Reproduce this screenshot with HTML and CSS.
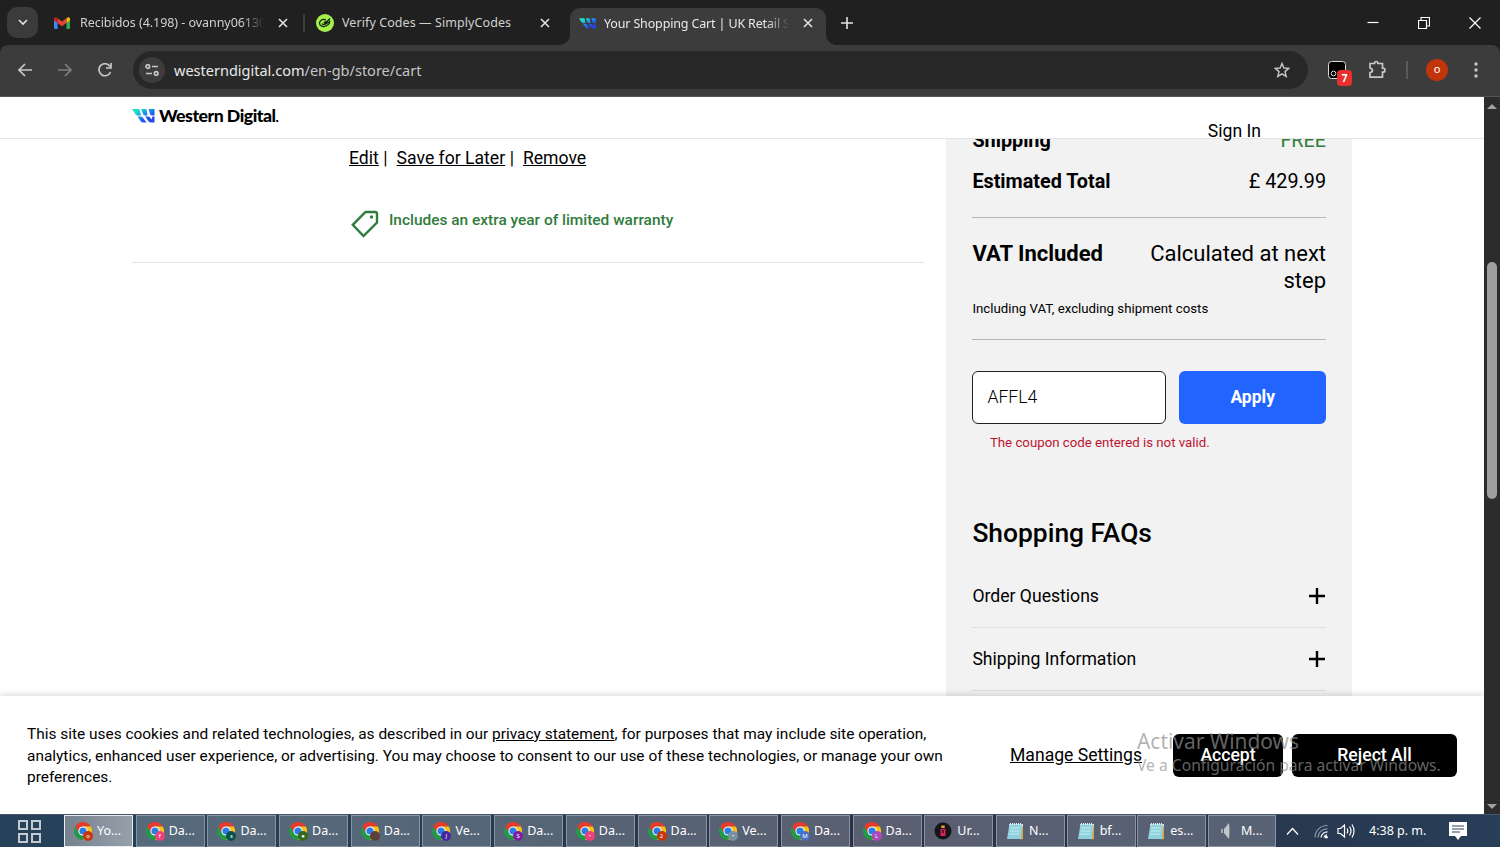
FILE: index.html
```html
<!DOCTYPE html>
<html lang="en">

<head>
    <meta charset="UTF-8">
    <meta name="viewport" content="width=device-width, initial-scale=1.0">
    <title>Your Shopping Cart | UK Retail Store</title>
    <link rel="stylesheet" href="styles.css">
</head>

<body>
    <!-- shared icons -->
    <svg class="defs">
        <linearGradient id="wd-fill" gradientUnits="userSpaceOnUse" x1="5" y1="0" x2="14" y2="14">
            <stop offset="0.1" stop-color="#1fe0c4" />
            <stop offset="0.5" stop-color="#1b8df0" />
            <stop offset="0.9" stop-color="#2347e8" />
        </linearGradient>
        <symbol id="wd" viewBox="0 0 24 14">
            <path fill="url(#wd-fill)" d="M0 0H6.500Q7.500 0 7.700 1L9 6.500H6Q4 6.500 3.200 5zM9 0H13Q14.500 0 14.700 1L15.500 6.500H13.500Q11.500 6.500 11 5zM16.500 0H22.500V6.500H20.500Q18.500 6.500 18 5zM5.500 7.500H9Q10.500 7.500 11.200 9L14.500 13.500H11.500Q9.500 13.500 8.500 12zM13 7.500H16Q17.500 7.500 18.300 8.700L19.500 10.500 20.500 7.500H22.500V13.500H19.500Q17.500 13.500 16.500 12.200z" />
        </symbol>
        <symbol id="close" viewBox="0 0 10 10">
            <path d="M1 1l8 8M9 1L1 9" />
        </symbol>
        <symbol id="chrome" viewBox="1 1 18 18">
            <path fill="#e33b2e" d="M2.200 5.500A9 9 0 0 1 17.800 5.500H10L6.100 12.250z" />
            <path fill="#fbc116" d="M17.800 5.500A9 9 0 0 1 10 19L13.900 12.250 10 5.500z" />
            <path fill="#229a48" d="M10 19A9 9 0 0 1 2.200 5.500L6.100 12.250H13.900z" />
            <circle cx="10" cy="10" r="4.600" fill="#fff" />
            <circle cx="10" cy="10" r="3.600" fill="#2a7de9" />
        </symbol>
        <symbol id="notepad" viewBox="0 0 18 18">
            <path fill="#e8e3cf" d="M3 2h14v15H3z" />
            <path fill="#d9a648" d="M16 4l1 1v12l-3 .5z" />
            <path fill="#8fd0dd" d="M3.500 2H16l-1 15H1z" />
            <path stroke="#c7edf3" stroke-width="1" d="M4 6h10M3.600 9h10M3.200 12h10" />
            <path stroke="#eee" stroke-dasharray="1 1" stroke-width="2" d="M4 2h12" />
        </symbol>
    </svg>

    <div class="tabstrip">
        <div class="tab-search">
            <svg width="10" height="7" viewBox="0 0 10 7"><path d="M1 1l4 4 4-4" /></svg>
        </div>
        <div class="tab gmail">
            <svg class="favicon" width="16" height="12" viewBox="0 0 16 12">
                <path fill="#4285f4" d="M0 2v9q0 1 1 1h2.600V4.500z" />
                <path fill="#34a853" d="M16 2v9q0 1-1 1h-2.600V4.500z" />
                <path fill="#fbbc04" d="M12.400 1.200Q15.500-1 16 2v1.300l-3.600 2.700z" />
                <path fill="#c5221f" d="M3.600 1.200Q.5-1 0 2v1.300L3.600 6z" />
                <path fill="#ea4335" d="M3.600 1.200L8 4.500l4.400-3.300V6L8 9.300 3.600 6z" />
            </svg>
            <span class="tab-title">Recibidos (4.198) - ovanny06130</span>
            <svg class="x" width="10" height="10"><use href="#close" /></svg>
        </div>
        <div class="tab-divider"></div>
        <div class="tab simply">
            <svg class="favicon" width="18" height="18" viewBox="0 0 18 18">
                <circle cx="9" cy="9" r="9" fill="#a6f04d" />
                <g fill="none" stroke="#14240c" stroke-width="1.300">
                    <path d="M10 5.800C6 4.500 3.300 7 3.500 9.500S7 13.300 10 12s4-3.500 3.500-5.500" />
                    <path d="M6 9.500c1 2 2 1 3.500-.5L14 4.500M7.500 8.500l4-1.500M9 10.500l4-2.500" />
                </g>
            </svg>
            <span class="tab-title">Verify Codes — SimplyCodes</span>
            <svg class="x" width="10" height="10"><use href="#close" /></svg>
        </div>
        <div class="tab active">
            <svg class="favicon" width="18" height="11"><use href="#wd" /></svg>
            <span class="tab-title">Your Shopping Cart | UK Retail Store</span>
            <svg class="x" width="10" height="10"><use href="#close" /></svg>
        </div>
        <svg class="new-tab" width="12" height="12" viewBox="0 0 12 12"><path d="M6 0v12M0 6h12" /></svg>
        <div class="window-buttons">
            <svg width="12" height="12" viewBox="0 0 12 12"><path d="M0.500 5.500h11" /></svg>
            <svg width="12" height="12" viewBox="0 0 12 12"><path d="M.5 3.500h8v8h-8zM3 3V.5h8.500V9H9" /></svg>
            <svg width="12" height="12" viewBox="0 0 12 12"><path d="M.5.5l11 11M11.500.5l-11 11" /></svg>
        </div>
    </div>

    <div class="toolbar">
        <div class="nav">
            <svg width="14" height="14" viewBox="0 0 14 14"><path d="M14 7H1.500M7 1L1 7l6 6" /></svg>
            <svg class="off" width="14" height="14" viewBox="0 0 14 14"><path d="M0 7h12.500M7 1l6 6-6 6" /></svg>
            <svg width="14" height="14" viewBox="0 0 14 14"><path d="M12.500 9A6 6 0 1 1 12 3.500M13 0v5H8" /></svg>
        </div>
        <div class="omnibox">
            <div class="site-info">
                <svg width="14" height="12" viewBox="0 0 14 12">
                    <path d="M7 2.500h6M1 9.500h6" />
                    <circle cx="2.800" cy="2.500" r="1.800" />
                    <circle cx="11.200" cy="9.500" r="1.800" />
                </svg>
            </div>
            <div class="url">westerndigital.com<span>/en-gb/store/cart</span></div>
            <svg class="star" width="16" height="16" viewBox="0 0 16 16"><path d="M8 1.500l1.900 4.500 4.800.4-3.700 3.200 1.200 4.800L8 11.800l-4.200 2.600L5 9.600 1.300 6.400 6.100 6z" /></svg>
        </div>
        <div class="ext">
            <svg width="18" height="18" viewBox="0 0 18 18">
                <rect x=".5" y=".5" width="17" height="17" rx="3" fill="#000" stroke="#ddd" />
                <circle cx="5.500" cy="12.500" r="2.300" fill="none" stroke="#ddd" />
            </svg>
            <span class="ext-count">7</span>
        </div>
        <svg class="puzzle" width="19" height="19" viewBox="0 0 19 19"><path d="M2 3.500h4.500q0-2 1.700-2t1.700 2h4.600v4.700q2.500 0 2.500 2t-2.500 2v5H2v-4.500q2.500-.5 2.500-2.200T2 8z" /></svg>
        <div class="bar"></div>
        <div class="avatar">o</div>
        <svg class="dots" width="4" height="16" viewBox="0 0 4 16">
            <circle cx="2" cy="2" r="1.700" />
            <circle cx="2" cy="8" r="1.700" />
            <circle cx="2" cy="14" r="1.700" />
        </svg>
    </div>

    <div class="viewport">
        <div class="page">
            <header class="site-header">
                <div class="logo">
                    <svg width="24" height="14"><use href="#wd" /></svg>
                    <span>Western Digital<small>.</small></span>
                </div>
                <a class="sign-in">Sign In</a>
            </header>

            <main class="cart">
                <section class="items">
                    <div class="item-links"><a>Edit</a><i>|</i><a>Save for Later</a><i>|</i><a>Remove</a></div>
                    <div class="warranty">
                        <svg width="28" height="28" viewBox="0 0 28 28">
                            <path d="M14.500 2H24q2 0 2 2v8.500L12.500 26 1.800 14.800z" />
                            <circle cx="20.500" cy="7" r="1.700" />
                        </svg>
                        <span>Includes an extra year of limited warranty</span>
                    </div>
                </section>

                <aside class="summary">
                    <div class="row shipping"><b>Shipping</b><span class="free">FREE</span></div>
                    <div class="row total"><b>Estimated Total</b><span>£ 429.99</span></div>
                    <div class="vat">
                        <div class="vat-row"><b>VAT Included</b><span>Calculated at next step</span></div>
                        <p>Including VAT, excluding shipment costs</p>
                    </div>
                    <div class="coupon">
                        <input type="text" value="AFFL4">
                        <button>Apply</button>
                    </div>
                    <p class="error">The coupon code entered is not valid.</p>
                    <h2>Shopping FAQs</h2>
                    <div class="faq"><span>Order Questions</span><svg width="16" height="16" viewBox="0 0 16 16"><path d="M8 0v16M0 8h16" /></svg></div>
                    <div class="faq"><span>Shipping Information</span><svg width="16" height="16" viewBox="0 0 16 16"><path d="M8 0v16M0 8h16" /></svg></div>
                </aside>
            </main>

            <div class="cookies">
                <p>This site uses cookies and related technologies, as described in our <a>privacy statement</a>, for purposes that may include site operation,<br>analytics, enhanced user experience, or advertising. You may choose to consent to our use of these technologies, or manage your own<br>preferences.</p>
                <a class="manage">Manage Settings</a>
                <button class="accept">Accept</button>
                <button class="reject">Reject All</button>
            </div>
        </div>
        <div class="scrollbar">
            <div class="arrow up"></div>
            <div class="thumb"></div>
            <div class="arrow down"></div>
        </div>
    </div>

    <div class="taskbar">
        <svg class="task-view" width="23" height="23" viewBox="0 0 23 23"><path d="M1 1h8v8H1zM14 1h8v8h-8zM1 14h8v8H1zM14 14h8v8h-8z" /></svg>
        <div class="tasks">
            <div class="task current"><svg><use href="#chrome" /></svg><em class="orange">o</em>Yo...</div>
            <div class="task"><svg><use href="#chrome" /></svg><em class="pink">f</em>Da...</div>
            <div class="task"><svg><use href="#chrome" /></svg><em class="teal">s</em>Da...</div>
            <div class="task"><svg><use href="#chrome" /></svg><em class="green">●</em>Da...</div>
            <div class="task"><svg><use href="#chrome" /></svg><em class="brown"></em>Da...</div>
            <div class="task"><svg><use href="#chrome" /></svg><em class="indigo">J</em>Ve...</div>
            <div class="task"><svg><use href="#chrome" /></svg><em class="purple">S</em>Da...</div>
            <div class="task"><svg><use href="#chrome" /></svg><em class="pink">•</em>Da...</div>
            <div class="task"><svg><use href="#chrome" /></svg><em class="orange">2</em>Da...</div>
            <div class="task"><svg><use href="#chrome" /></svg><em class="grey">•</em>Ve...</div>
            <div class="task"><svg><use href="#chrome" /></svg><em class="blue">M</em>Da...</div>
            <div class="task"><svg><use href="#chrome" /></svg><em class="violet">L</em>Da...</div>
            <div class="task">
                <svg viewBox="0 0 18 18">
                    <circle cx="9" cy="9" r="8.500" fill="#161516" />
                    <path fill="#d91f5e" d="M6.500 7h5v7h-5z" />
                    <path fill="#e5a52f" d="M7.300 3.500h3.400v2.500H7.300z" />
                    <path fill="#161516" d="M8.300 8h1.400v3H8.300z" />
                </svg>Ur...</div>
            <div class="task note"><svg><use href="#notepad" /></svg>N...</div>
            <div class="task note"><svg><use href="#notepad" /></svg>bf...</div>
            <div class="task note"><svg><use href="#notepad" /></svg>es...</div>
            <div class="task note last">
                <svg viewBox="0 0 18 18">
                    <path fill="#c3c7cb" d="M11 1l-5 6v4l5 6z" />
                    <path fill="#878d95" d="M11 1q2 8 0 16z" />
                    <path fill="#a9aeb4" d="M3 7h2v4H3z" />
                </svg>M...</div>
        </div>
        <div class="tray">
            <svg width="13" height="9" viewBox="0 0 13 9"><path d="M1 7.500L6.500 1.500 12 7.500" /></svg>
            <svg width="15" height="15" viewBox="0 0 15 15">
                <path class="dim" d="M1 13.500A12 12 0 0 1 13.500 1.500M4 13.500A9 9 0 0 1 13.500 4.800" />
                <path d="M7 13.500A6.500 6.500 0 0 1 13.500 7.800M10 13.500q.5-2.500 3-3" />
                <circle cx="12.300" cy="13" r="1.500" fill="#fff" stroke="none" />
            </svg>
            <svg width="19" height="16" viewBox="0 0 19 16"><path d="M1 5.500h2.500L7.500 2v12l-4-3.500H1zM10 5.500q1.500 2.500 0 5M12.500 3.500q3 4.500 0 9M15 1.500q4 6.500 0 13" /></svg>
            <span>4:38 p. m.</span>
            <svg class="notes" width="18" height="18" viewBox="0 0 18 18">
                <path fill="#fff" stroke="none" d="M0 0h18v14h-6l-3 4-3-4H0z" />
                <path stroke="#2d4257" d="M3 4h12M3 7h12M3 10h8" />
            </svg>
        </div>
    </div>

    <div class="watermark">
        <div>Activar Windows</div>
        <p>Ve a Configuración para activar Windows.</p>
    </div>
</body>

</html>
```
FILE: styles.css
```css
* {
    box-sizing: border-box;
}

body {
    margin: 0;
    height: 847px;
    display: flex;
    flex-direction: column;
    overflow: hidden;
    background-color: #202020;
    font-family: Roboto, sans-serif;
    color: #000;
}

p, h2 {
    margin: 0;
}

svg {
    flex: none;
    fill: none;
}

.defs {
    position: absolute;
    width: 0;
    height: 0;
}

/* tabs */
.tabstrip {
    height: 45px;
    display: flex;
    align-items: center;
    padding-left: 7px;
    font-family: "Noto Sans", sans-serif;
    font-size: 12.5px;
    color: #d0d0d0;
    stroke: #e3e3e3;
    stroke-width: 1.6;
}

.tab-search {
    width: 31px;
    height: 31px;
    margin-right: 6px;
    border-radius: 10px;
    background-color: #3b3b3b;
    display: flex;
    align-items: center;
    justify-content: center;
}

.favicon {
    stroke: none;
}

.tab {
    display: flex;
    align-items: center;
    height: 37px;
    padding: 0 12px 0 10px;
}

.tab-title {
    flex: 1;
    margin: 0 14px 0 8px;
    overflow: hidden;
    white-space: nowrap;
    stroke: none;
    letter-spacing: -0.15px;
}

.gmail {
    width: 256px;
}

.gmail .tab-title {
    margin-left: 10px;
    letter-spacing: -0.05px;
}

.gmail .tab-title,
.active .tab-title {
    -webkit-mask-image: linear-gradient(90deg, #000 88%, transparent);
    mask-image: linear-gradient(90deg, #000 88%, transparent);
}

.tab-divider {
    width: 2px;
    height: 18px;
    margin-left: 3px;
    background-color: #3d3d3d;
}

.simply {
    width: 257px;
    padding-left: 11px;
    margin-right: 8px;
}

.simply .tab-title {
    letter-spacing: 0.08px;
}

.active {
    width: 256px;
    align-self: flex-end;
    border-radius: 10px 10px 0 0;
    background-color: #3c3c3c;
    color: #e8e8e8;
    position: relative;
    padding: 0 13px 7px 9px;
}

.active .tab-title {
    margin-left: 7px;
}

.active::before,
.active::after {
    content: "";
    position: absolute;
    bottom: 0;
    left: -10px;
    width: 10px;
    height: 10px;
    background: radial-gradient(circle at 0 0, transparent 9.5px, #3c3c3c 10px);
}

.active::after {
    left: auto;
    right: -10px;
    background: radial-gradient(circle at 100% 0, transparent 9.5px, #3c3c3c 10px);
}

.new-tab {
    margin-left: 15px;
}

.window-buttons {
    margin-left: auto;
    padding-right: 19px;
    display: flex;
    gap: 39px;
    stroke: #fff;
    stroke-width: 1.2;
}

/* address bar */
.toolbar {
    height: 52px;
    display: flex;
    align-items: center;
    padding: 0 22px 2px 18px;
    border-radius: 8px 8px 0 0;
    background-color: #3c3c3c;
    border-bottom: 1px solid #555;
    font-family: "Noto Sans", sans-serif;
    stroke: #c7c7c7;
    stroke-width: 1.7;
}

.nav {
    display: flex;
    gap: 26px;
    width: 115px;
}

.off {
    stroke: #7d7d7d;
}

.omnibox {
    width: 1175px;
    height: 38px;
    display: flex;
    align-items: center;
    padding: 0 18px 0 6px;
    border-radius: 19px;
    background-color: #282828;
}

.site-info {
    width: 26px;
    height: 26px;
    border-radius: 50%;
    background-color: #3c3c3c;
    display: flex;
    align-items: center;
    justify-content: center;
}

.url {
    flex: 1;
    margin-left: 9px;
    font-size: 14.5px;
    color: #e8e8e8;
    stroke: none;
}

.url span {
    color: #c4c4c4;
}

.star {
    stroke-width: 1.4;
}

.ext {
    position: relative;
    height: 18px;
    margin-left: 20px;
    stroke-width: 1;
}

.ext-count {
    position: absolute;
    left: 9px;
    top: 9px;
    width: 15px;
    height: 16px;
    border-radius: 4px;
    background-color: #e8302f;
    color: #fff;
    font-size: 10px;
    font-weight: bold;
    line-height: 16px;
    text-align: center;
    stroke: none;
}

.puzzle {
    margin-left: 22px;
}

.bar {
    width: 2px;
    height: 18px;
    margin: 0 18px 0 19px;
    background-color: #5a5a5a;
}

.avatar {
    width: 22px;
    height: 22px;
    border-radius: 50%;
    background-color: #c2350b;
    color: #fff;
    font-size: 11px;
    line-height: 20px;
    text-align: center;
    stroke: none;
}

.dots {
    margin-left: auto;
    fill: #c7c7c7;
    stroke: none;
}

/* web page */
.viewport {
    height: 717px;
    display: flex;
}

.page {
    width: 1484px;
    display: flex;
    flex-direction: column;
    background-color: #fff;
}

.site-header {
    height: 42px;
    display: flex;
    justify-content: space-between;
    padding: 0 223px 0 132px;
    border-bottom: 1px solid #e4e4e4;
    position: relative;
    z-index: 1;
}

.logo {
    display: flex;
    align-items: center;
    height: 37px;
    font-family: Lato, sans-serif;
    font-size: 17.7px;
    font-weight: 900;
    letter-spacing: -0.5px;
}

.logo span {
    margin-left: 3px;
}

.logo small {
    font-size: 14px;
}

.sign-in {
    margin-top: 24px;
    font-size: 17.6px;
    line-height: 20px;
}

.cart {
    height: 557px;
    display: flex;
    justify-content: space-between;
    padding: 0 132px;
    overflow: hidden;
}

.items {
    width: 792px;
    height: 124px;
    padding: 9px 0 0 217px;
    border-bottom: 1px solid #e2e2e2;
}

.item-links {
    font-size: 17.6px;
    line-height: 20px;
}

.item-links a {
    text-decoration: underline;
}

.item-links i {
    font-style: normal;
    margin: 0 9px 0 4.5px;
}

.warranty {
    display: flex;
    align-items: flex-start;
    margin: 42px 0 0 2px;
    color: #317c3c;
    font-size: 15.45px;
    font-weight: 500;
    line-height: 20px;
}

.warranty svg {
    stroke: #317c3c;
    stroke-width: 2.4;
}

.warranty circle {
    fill: #317c3c;
    stroke: none;
}

.warranty span {
    margin-left: 10px;
}

.summary {
    width: 406px;
    padding: 0 26px 0 26.4px;
    background-color: #f2f2f2;
}

.row {
    display: flex;
    justify-content: space-between;
    font-size: 19.8px;
    line-height: 22px;
}

.row b,
.vat b {
    font-weight: 700;
}

.shipping {
    margin-top: -9px;
}

.free {
    color: #317c3c;
}

.total {
    height: 47px;
    margin-top: 19px;
    border-bottom: 1px solid #b5b5b5;
}

.vat {
    height: 122px;
    padding-top: 23px;
    border-bottom: 1px solid #b5b5b5;
}

.vat-row {
    display: flex;
    justify-content: space-between;
    font-size: 22px;
    line-height: 26.5px;
}

.vat-row span {
    width: 190px;
    text-align: right;
}

.vat p {
    margin-top: 6px;
    font-size: 13.25px;
    line-height: 18px;
}

.coupon {
    display: flex;
    gap: 13px;
    height: 53px;
    margin-top: 31px;
}

.coupon input {
    width: 194px;
    padding: 0 14px 2px;
    border: 1px solid #222;
    border-radius: 6px;
    font: 300 17.6px Roboto, sans-serif;
    background-color: #fff;
}

.coupon button {
    flex: 1;
    padding: 0 0 1px;
    border: none;
    border-radius: 6px;
    background-color: #2264ff;
    color: #fff;
    font: 700 17.5px Roboto, sans-serif;
}

.error {
    margin: 10px 0 0 17.5px;
    color: #bd1431;
    font-size: 13.25px;
    line-height: 18px;
}

.summary h2 {
    margin-top: 63px;
    font-size: 26.4px;
    font-weight: 500;
    line-height: 36px;
}

.faq {
    display: flex;
    justify-content: space-between;
    align-items: center;
    height: 63px;
    border-bottom: 1px solid #dedede;
    font-size: 17.6px;
}

.faq svg {
    stroke: #000;
    stroke-width: 2.4;
    margin-right: 1px;
}

.summary h2 + .faq {
    margin-top: 14px;
}

/* cookie banner */
.cookies {
    height: 118px;
    display: flex;
    align-items: center;
    padding: 0 27px;
    background-color: #fff;
    box-shadow: 0 0 8px rgba(0, 0, 0, 0.2);
    clip-path: inset(-10px 0 0 0);
    position: relative;
}

.cookies p {
    width: 983px;
    padding-top: 3px;
    font-size: 15.43px;
    line-height: 21.7px;
    white-space: nowrap;
}

.cookies a {
    text-decoration: underline;
}

.manage {
    width: 163px;
    padding-bottom: 1px;
    font-size: 17.6px;
}

.cookies button {
    height: 43px;
    padding: 0;
    border: none;
    border-radius: 6px;
    background-color: #000;
    color: #fff;
    font: 500 17.6px Roboto, sans-serif;
}

.cookies .accept {
    width: 110px;
    margin-right: 9px;
}

.cookies .reject {
    width: 165px;
}

/* scrollbar */
.scrollbar {
    width: 16px;
    display: flex;
    flex-direction: column;
    align-items: center;
    background-color: #2c2c2c;
}

.arrow {
    width: 0;
    height: 0;
    border: 5px solid transparent;
}

.up {
    margin-top: 2px;
    border-bottom-color: #a0a0a0;
}

.thumb {
    width: 10px;
    height: 237px;
    margin-top: 153px;
    border-radius: 5px;
    background-color: #9f9f9f;
}

.down {
    margin: auto 0 0;
    border-top-color: #a0a0a0;
}

/* windows taskbar */
.taskbar {
    height: 33px;
    display: flex;
    align-items: center;
    padding-left: 18px;
    background: linear-gradient(90deg, #26425a, #263c52 30%, #2b3149 60%, #28384f 85%, #283e58);
    border-top: 1px solid #46566a;
    font-family: "Noto Sans", sans-serif;
    font-size: 12.5px;
    color: #fff;
    z-index: 1;
}

.task-view {
    margin-right: 23px;
    stroke: #c3c9cf;
    stroke-width: 2;
}

.tasks {
    display: flex;
    align-self: stretch;
    width: 1220px;
}

.task {
    width: 69px;
    height: 32px;
    margin-right: 2.7px;
    flex: none;
    display: flex;
    align-items: center;
    padding: 0 0 1px 9px;
    border: 1px solid #8b95a1;
    background-color: rgba(255, 255, 255, 0.22);
    position: relative;
}

.task.note {
    margin-right: 1.7px;
}

.task.last {
    width: 68px;
}

.task.current {
    border-color: #e8ecf0;
    background: linear-gradient(90deg, #77828f, #95a0ab);
}

.task svg {
    width: 18px;
    height: 18px;
    margin-right: 5px;
}

/* profile badge on the chrome icon */
.task em {
    position: absolute;
    left: 18px;
    top: 15px;
    width: 10px;
    height: 10px;
    border-radius: 50%;
    color: #fff;
    font-size: 6px;
    font-style: normal;
    line-height: 10px;
    text-align: center;
}

.orange { background-color: #c5360f; }
.pink { background-color: #ec407a; }
.teal { background-color: #0b4f4b; }
.green { background-color: #33691e; }
.brown { background-color: #5d4037; }
.indigo { background-color: #4527a0; }
.purple { background-color: #7b1fa2; }
.grey { background-color: #78909c; }
.blue { background-color: #4a6fc4; }
.violet { background-color: #ab47bc; }

.tray {
    display: flex;
    align-items: center;
    stroke: #fff;
    stroke-width: 1.2;
    margin-left: 2px;
}

.tray svg {
    margin-right: 8px;
}

.tray svg:first-child {
    margin-right: 15px;
}

.tray .dim {
    stroke: #8d99a6;
}

.tray span {
    width: 80px;
    margin-left: 5px;
    padding-bottom: 1px;
    stroke: none;
    white-space: nowrap;
}

/* activation notice over everything */
.watermark {
    position: absolute;
    left: 1137px;
    top: 727px;
    z-index: 2;
    color: rgba(145, 145, 145, 0.7);
    font-family: "Noto Sans", sans-serif;
    font-size: 20.9px;
    line-height: 28px;
    white-space: nowrap;
}

.watermark p {
    font-size: 15.65px;
    line-height: 21px;
}
```
